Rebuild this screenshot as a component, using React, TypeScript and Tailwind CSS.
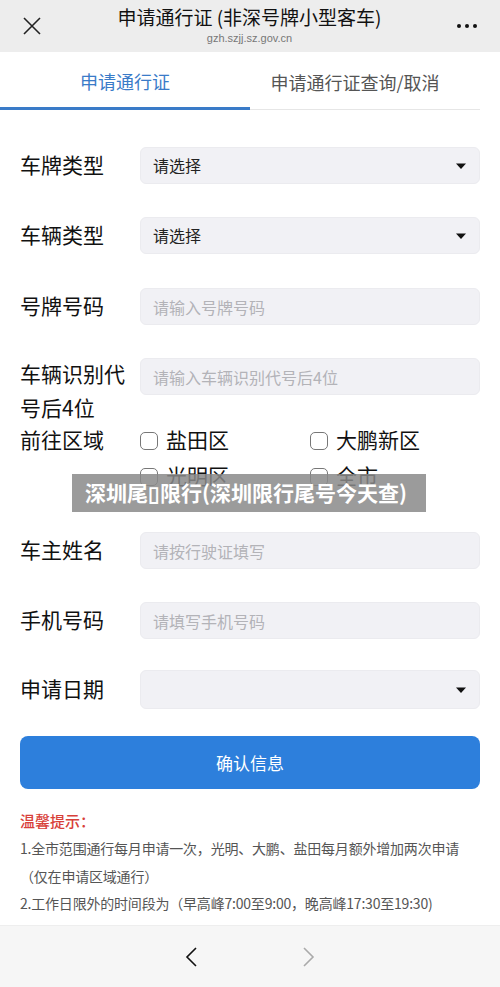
import React from "react";

const font = { fontFamily: '"Noto Sans CJK SC", "Noto Sans", sans-serif' };

const Caret = () => (
  <svg width="12" height="8" viewBox="0 0 12 8" className="shrink-0">
    <path d="M1 1.5h10L6 7z" fill="#111" />
  </svg>
);

const SelectBox = ({ value }: { value?: string }) => (
  <div className="flex-1 h-[37px] bg-[#f1f1f5] rounded-md border border-[#ebebef] flex items-center justify-between pl-3 pr-3">
    <span className="text-[16px] text-[#222] mt-[-2px]">{value}</span>
    <Caret />
  </div>
);

const InputBox = ({ placeholder }: { placeholder: string }) => (
  <div className="flex-1 h-[37px] bg-[#f1f1f5] rounded-md border border-[#ebebef] flex items-center pl-3">
    <span className="text-[16px] text-[#b3b3b8]">{placeholder}</span>
  </div>
);

const Row = ({ label, children, className = "" }: { label: string; children: React.ReactNode; className?: string }) => (
  <div className={`flex items-center ${className}`}>
    <div className="w-[120px] shrink-0 text-[21px] text-[#111] leading-[34px] mt-[-4px]">{label}</div>
    {children}
  </div>
);

const Check = ({ label }: { label: string }) => (
  <div className="flex items-center h-[36px] gap-2">
    <span className="w-[18px] h-[18px] rounded-[5px] border-[1.5px] border-[#777] bg-white" />
    <span className="text-[21px] text-[#111] mt-[-3px]">{label}</span>
  </div>
);

const App: React.FC = () => {
  return (
    <div className="relative w-[500px] h-[987px] bg-white overflow-hidden flex flex-col" style={font}>
      {/* top bar */}
      <div className="h-[52px] bg-[#ededed] flex items-center px-[22px] shrink-0">
        <svg width="20" height="20" viewBox="0 0 20 20">
          <path d="M2 2l16 16M18 2L2 18" stroke="#222" strokeWidth="1.6" />
        </svg>
        <div className="flex-1 flex flex-col items-center">
          <div className="text-[19px] text-[#111] leading-[22px] mt-[-2px]">申请通行证 (非深号牌小型客车)</div>
          <div className="text-[11px] text-[#777] leading-[14px] mt-[3px]" style={{ fontFamily: '"Liberation Sans", sans-serif' }}>gzh.szjj.sz.gov.cn</div>
        </div>
        <div className="flex gap-[4px] items-center pr-[1px]">
          <span className="w-[4px] h-[4px] rounded-full bg-[#111]" />
          <span className="w-[4px] h-[4px] rounded-full bg-[#111]" />
          <span className="w-[4px] h-[4px] rounded-full bg-[#111]" />
        </div>
      </div>

      {/* tabs */}
      <div className="h-[58px] flex shrink-0 pr-[20px]">
        <div className="w-[250px] flex items-center justify-center border-b-[3px] border-[#3a7bc8]">
          <span className="text-[18px] text-[#3a7bc8] mt-[4px]">申请通行证</span>
        </div>
        <div className="flex-1 flex items-center justify-center border-b border-[#e6e6e6]">
          <span className="text-[18px] text-[#555] mt-[4px] ml-[-20px]">申请通行证查询/取消</span>
        </div>
      </div>

      {/* form */}
      <div className="px-[20px] flex flex-col">
        <Row label="车牌类型" className="mt-[37px]">
          <SelectBox value="请选择" />
        </Row>
        <Row label="车辆类型" className="mt-[33px]">
          <SelectBox value="请选择" />
        </Row>
        <Row label="号牌号码" className="mt-[34px]">
          <InputBox placeholder="请输入号牌号码" />
        </Row>
        <div className="flex items-start mt-[33px]">
          <div className="w-[120px] shrink-0 text-[21px] text-[#111] leading-[34px] mt-[-2px]">车辆识别代号后4位</div>
          <InputBox placeholder="请输入车辆识别代号后4位" />
        </div>
        <div className="flex items-start">
          <div className="w-[120px] shrink-0 text-[21px] text-[#111] leading-[34px] mt-[-2px]">前往区域</div>
          <div className="grid grid-cols-[170px_1fr] mt-[-1px]">
            <Check label="盐田区" />
            <Check label="大鹏新区" />
            <Check label="光明区" />
            <Check label="全市" />
          </div>
        </div>
        <Row label="车主姓名" className="mt-[37px]">
          <InputBox placeholder="请按行驶证填写" />
        </Row>
        <Row label="手机号码" className="mt-[33px]">
          <InputBox placeholder="请填写手机号码" />
        </Row>
        <Row label="申请日期" className="mt-[31px]">
          <div className="flex-1 h-[39px] bg-[#f1f1f5] rounded-md border border-[#ebebef] flex items-center justify-end pr-3">
            <Caret />
          </div>
        </Row>

        <button className="mt-[27px] h-[53px] rounded-lg bg-[#2d7fdc] text-white text-[17px]">确认信息</button>

        <div className="mt-[18px] text-[15px] leading-[28px] text-[#d8403a] font-medium">温馨提示：</div>
        <div className="text-[14px] leading-[27.5px] text-[#555] tracking-[-0.2px]">
          <div className="whitespace-nowrap">1.全市范围通行每月申请一次，光明、大鹏、盐田每月额外增加两次申请</div>
          <div className="whitespace-nowrap">（仅在申请区域通行）</div>
          <div className="whitespace-nowrap">2.工作日限外的时间段为（早高峰7:00至9:00，晚高峰17:30至19:30)</div>
        </div>
      </div>

      {/* bottom bar */}
      <div className="mt-auto h-[62px] bg-[#f6f6f6] border-t border-[#eeeeee] flex items-center justify-center gap-[104px] shrink-0">
        <svg width="14" height="22" viewBox="0 0 14 22">
          <path d="M12 2L3 11l9 9" stroke="#111" strokeWidth="1.6" fill="none" />
        </svg>
        <svg width="14" height="22" viewBox="0 0 14 22">
          <path d="M2 2l9 9-9 9" stroke="#aaa" strokeWidth="1.6" fill="none" />
        </svg>
      </div>

      {/* overlay caption */}
      <div className="absolute left-[72px] top-[474px] w-[354px] h-[38px] bg-[#8a8a8a]/85 flex items-center pl-[13px]">
        <span className="text-white text-[21px] font-bold whitespace-nowrap">深圳尾▯限行(深圳限行尾号今天查)</span>
      </div>
    </div>
  );
};

export default App;
